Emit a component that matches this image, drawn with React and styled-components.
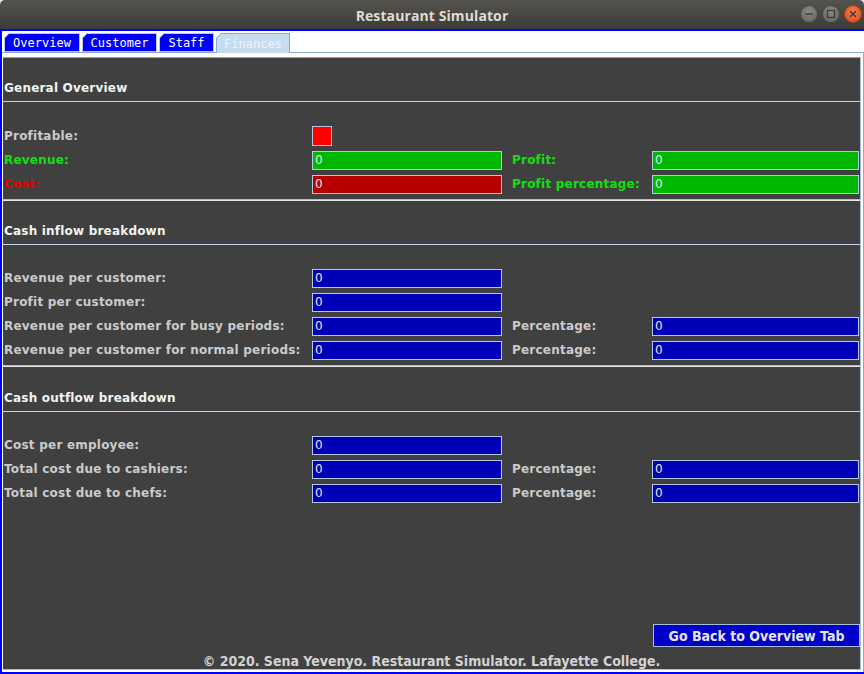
import React from 'react';
import styled, { createGlobalStyle } from 'styled-components';

const GlobalStyle = createGlobalStyle`
  html, body {
    margin: 0;
    padding: 0;
    background: #3c3b37;
  }
  * {
    box-sizing: border-box;
  }
`;

const tabs = [
  { name: 'Overview', width: 76 },
  { name: 'Customer', width: 75 },
  { name: 'Staff', width: 55 },
  { name: 'Finances', width: 74, active: true },
];

const sections = [
  {
    title: 'General Overview',
    rows: [
      { label: 'Profitable:', indicator: true },
      { label: 'Revenue:', tone: 'green', value: '0', side: { label: 'Profit:', tone: 'green', value: '0' } },
      { label: 'Cost:', tone: 'red', value: '0', side: { label: 'Profit percentage:', tone: 'green', value: '0' } },
    ],
  },
  {
    title: 'Cash inflow breakdown',
    rows: [
      { label: 'Revenue per customer:', value: '0' },
      { label: 'Profit per customer:', value: '0' },
      { label: 'Revenue per customer for busy periods:', value: '0', side: { label: 'Percentage:', value: '0' } },
      { label: 'Revenue per customer for normal periods:', value: '0', side: { label: 'Percentage:', value: '0' } },
    ],
  },
  {
    title: 'Cash outflow breakdown',
    last: true,
    rows: [
      { label: 'Cost per employee:', value: '0' },
      { label: 'Total cost due to cashiers:', value: '0', side: { label: 'Percentage:', value: '0' } },
      { label: 'Total cost due to chefs:', value: '0', side: { label: 'Percentage:', value: '0' } },
    ],
  },
];

const App = () => {
  return (
    <>
      <GlobalStyle />
      <Window>
        <TitleBar>
          <Title>Restaurant Simulator</Title>
          <WindowButtons>
            <WinButton>
              <svg width="10" height="10" viewBox="0 0 10 10">
                <path d="M1.5 5h7" stroke="#3c3b37" strokeWidth="1.4" />
              </svg>
            </WinButton>
            <WinButton>
              <svg width="10" height="10" viewBox="0 0 10 10">
                <rect x="1.5" y="1.5" width="7" height="7" fill="none" stroke="#3c3b37" strokeWidth="1.3" />
              </svg>
            </WinButton>
            <WinButton $close>
              <svg width="10" height="10" viewBox="0 0 10 10">
                <path d="M2.2 2.2l5.6 5.6M7.8 2.2L2.2 7.8" stroke="#3c3b37" strokeWidth="1.4" />
              </svg>
            </WinButton>
          </WindowButtons>
        </TitleBar>

        <Body>
          <TabStrip>
            {tabs.map((tab) => (
              <TabOuter key={tab.name} $width={tab.width} $active={tab.active}>
                <TabInner $active={tab.active}>{tab.name}</TabInner>
              </TabOuter>
            ))}
          </TabStrip>

          <Panel>
            <Content>
              {sections.map((section) => (
                <Section key={section.title} $last={section.last}>
                  <SectionHeader $tall={section.last}>{section.title}</SectionHeader>
                  <SectionBody>
                    {section.rows.map((row) => (
                      <Row key={row.label} $tall={row.indicator}>
                        <Label $tone={row.tone}>{row.label}</Label>
                        <FieldCell>
                          {row.indicator ? (
                            <Indicator />
                          ) : (
                            <Field $tone={row.tone}>{row.value}</Field>
                          )}
                        </FieldCell>
                        {row.side && (
                          <>
                            <SideLabel $tone={row.side.tone}>{row.side.label}</SideLabel>
                            <FieldCell>
                              <Field $tone={row.side.tone}>{row.side.value}</Field>
                            </FieldCell>
                          </>
                        )}
                      </Row>
                    ))}
                  </SectionBody>
                </Section>
              ))}

              <Spacer />

              <ButtonRow>
                <BackButton>Go Back to Overview Tab</BackButton>
              </ButtonRow>
              <Footer>© 2020. Sena Yevenyo. Restaurant Simulator. Lafayette College.</Footer>
            </Content>
          </Panel>
        </Body>
      </Window>
    </>
  );
};

const toneText = {
  green: '#10e010',
  red: '#e00000',
};

const toneField = {
  green: '#00b800',
  red: '#b80000',
};

const Window = styled.div`
  width: 864px;
  height: 674px;
  display: flex;
  flex-direction: column;
  background: #dce6f4;
`;

const TitleBar = styled.div`
  height: 29px;
  flex: none;
  position: relative;
  display: flex;
  align-items: center;
  justify-content: center;
  background: linear-gradient(#55534d, #3c3b37);
  border-radius: 5px 5px 0 0;
`;

const Title = styled.div`
  font-family: 'Open Sans', 'DejaVu Sans', sans-serif;
  font-weight: 700;
  font-size: 14px;
  color: #dfdbd2;
  letter-spacing: 0.1px;
  padding-top: 1px;
`;

const WindowButtons = styled.div`
  position: absolute;
  right: 2px;
  top: 5px;
  display: flex;
  gap: 4px;
`;

const WinButton = styled.div`
  width: 18px;
  height: 18px;
  border-radius: 50%;
  display: flex;
  align-items: center;
  justify-content: center;
  background: ${(p) =>
    p.$close
      ? 'radial-gradient(circle at 50% 35%, #f37a4a, #df4a16)'
      : 'radial-gradient(circle at 50% 35%, #8a8883, #64625d)'};
  border: 1px solid ${(p) => (p.$close ? '#b0401a' : '#4a4844')};
`;

const Body = styled.div`
  flex: 1;
  display: flex;
  flex-direction: column;
  background: #ffffff;
  border-top: 2px solid #0000ff;
  border-left: 2px solid #0000ff;
  border-bottom: 2px solid #0000ff;
  min-height: 0;
`;

const TabStrip = styled.div`
  display: flex;
  gap: 2px;
  padding: 2px 0 0 2px;
  height: 21px;
  flex: none;
  align-items: flex-end;
`;

const TabOuter = styled.div`
  width: ${(p) => p.$width}px;
  height: ${(p) => (p.$active ? 20 : 19)}px;
  padding: 1px 1px ${(p) => (p.$active ? 0 : 1)}px 1px;
  background: ${(p) => (p.$active ? '#8da8d6' : '#b9c6dc')};
  clip-path: polygon(5px 0, 100% 0, 100% 100%, 0 100%, 0 5px);
  margin-bottom: ${(p) => (p.$active ? -1 : 0)}px;
  position: relative;
`;

const TabInner = styled.div`
  height: 100%;
  display: flex;
  align-items: center;
  justify-content: center;
  background: ${(p) => (p.$active ? '#c8dcf0' : '#0000ff')};
  color: ${(p) => (p.$active ? '#eef3fa' : '#ffffff')};
  font-family: 'DejaVu Sans Mono', monospace;
  font-size: 12px;
  clip-path: polygon(4px 0, 100% 0, 100% 100%, 0 100%, 0 4px);
  padding-top: 1px;
`;

const Panel = styled.div`
  flex: 1;
  min-height: 0;
  display: flex;
  border-top: 1px solid #8ca8d8;
  border-right: 1px solid #8ca8d8;
  padding: 4px 2px 2px 1px;
  background: #ffffff;
`;

const Content = styled.div`
  flex: 1;
  display: flex;
  flex-direction: column;
  background: #404040;
  border-top: 1px solid #8ea2c0;
  border-right: 1px solid #a8bcdc;
  border-bottom: 1px solid #a8bcdc;
`;

const Section = styled.div`
  border-bottom: ${(p) => (p.$last ? 'none' : '1px solid #a7bce2')};
  box-shadow: ${(p) => (p.$last ? 'none' : '0 1px 0 #e8e8e8')};
  margin-bottom: ${(p) => (p.$last ? 0 : 1)}px;
`;

const SectionHeader = styled.div`
  height: ${(p) => (p.$tall ? 45 : 44)}px;
  padding: ${(p) => (p.$tall ? 23 : 22)}px 0 0 1px;
  line-height: 16px;
  font-family: 'DejaVu Sans', sans-serif;
  font-weight: 700;
  font-size: 12px;
  letter-spacing: 0.2px;
  color: #f2f2f2;
  border-bottom: 1px solid #c4d4ee;
`;

const SectionBody = styled.div`
  padding: 21px 0 3px 0;
`;

const Row = styled.div`
  display: grid;
  grid-template-columns: 308px 190px 150px 207px;
  height: ${(p) => (p.$tall ? 25 : 24)}px;
  align-items: center;
  padding-left: 1px;
`;

const Label = styled.div`
  font-family: 'DejaVu Sans', sans-serif;
  font-weight: 700;
  font-size: 12px;
  letter-spacing: 0.22px;
  color: ${(p) => toneText[p.$tone] || '#cbcbcb'};
  white-space: nowrap;
`;

const SideLabel = styled(Label)`
  padding-left: 10px;
`;

const FieldCell = styled.div`
  display: flex;
  align-items: center;
`;

const Field = styled.div`
  width: 100%;
  height: 19px;
  border: 1px solid #b4c8e4;
  background: ${(p) => toneField[p.$tone] || '#0000b8'};
  color: #e4e8f0;
  font-family: 'DejaVu Sans', sans-serif;
  font-size: 12px;
  line-height: 17px;
  padding-left: 2px;
`;

const Indicator = styled.div`
  width: 20px;
  height: 20px;
  background: #ff0000;
  border: 1px solid #b4c8e4;
`;

const Spacer = styled.div`
  flex: 1;
`;

const ButtonRow = styled.div`
  display: flex;
  justify-content: flex-end;
`;

const BackButton = styled.button`
  width: 207px;
  height: 23px;
  margin: 0;
  padding: 0;
  background: #0000c8;
  border: 1px solid #a8bcdc;
  color: #e4e4e4;
  font-family: 'DejaVu Sans Condensed', 'DejaVu Sans', sans-serif;
  font-stretch: condensed;
  font-weight: 700;
  font-size: 14px;
  cursor: pointer;
`;

const Footer = styled.div`
  text-align: center;
  padding: 7px 0 0 0;
  height: 22px;
  line-height: 15px;
  font-family: 'DejaVu Sans Condensed', 'DejaVu Sans', sans-serif;
  font-stretch: condensed;
  font-weight: 700;
  font-size: 14px;
  color: #d2d2d2;
`;

export default App;
